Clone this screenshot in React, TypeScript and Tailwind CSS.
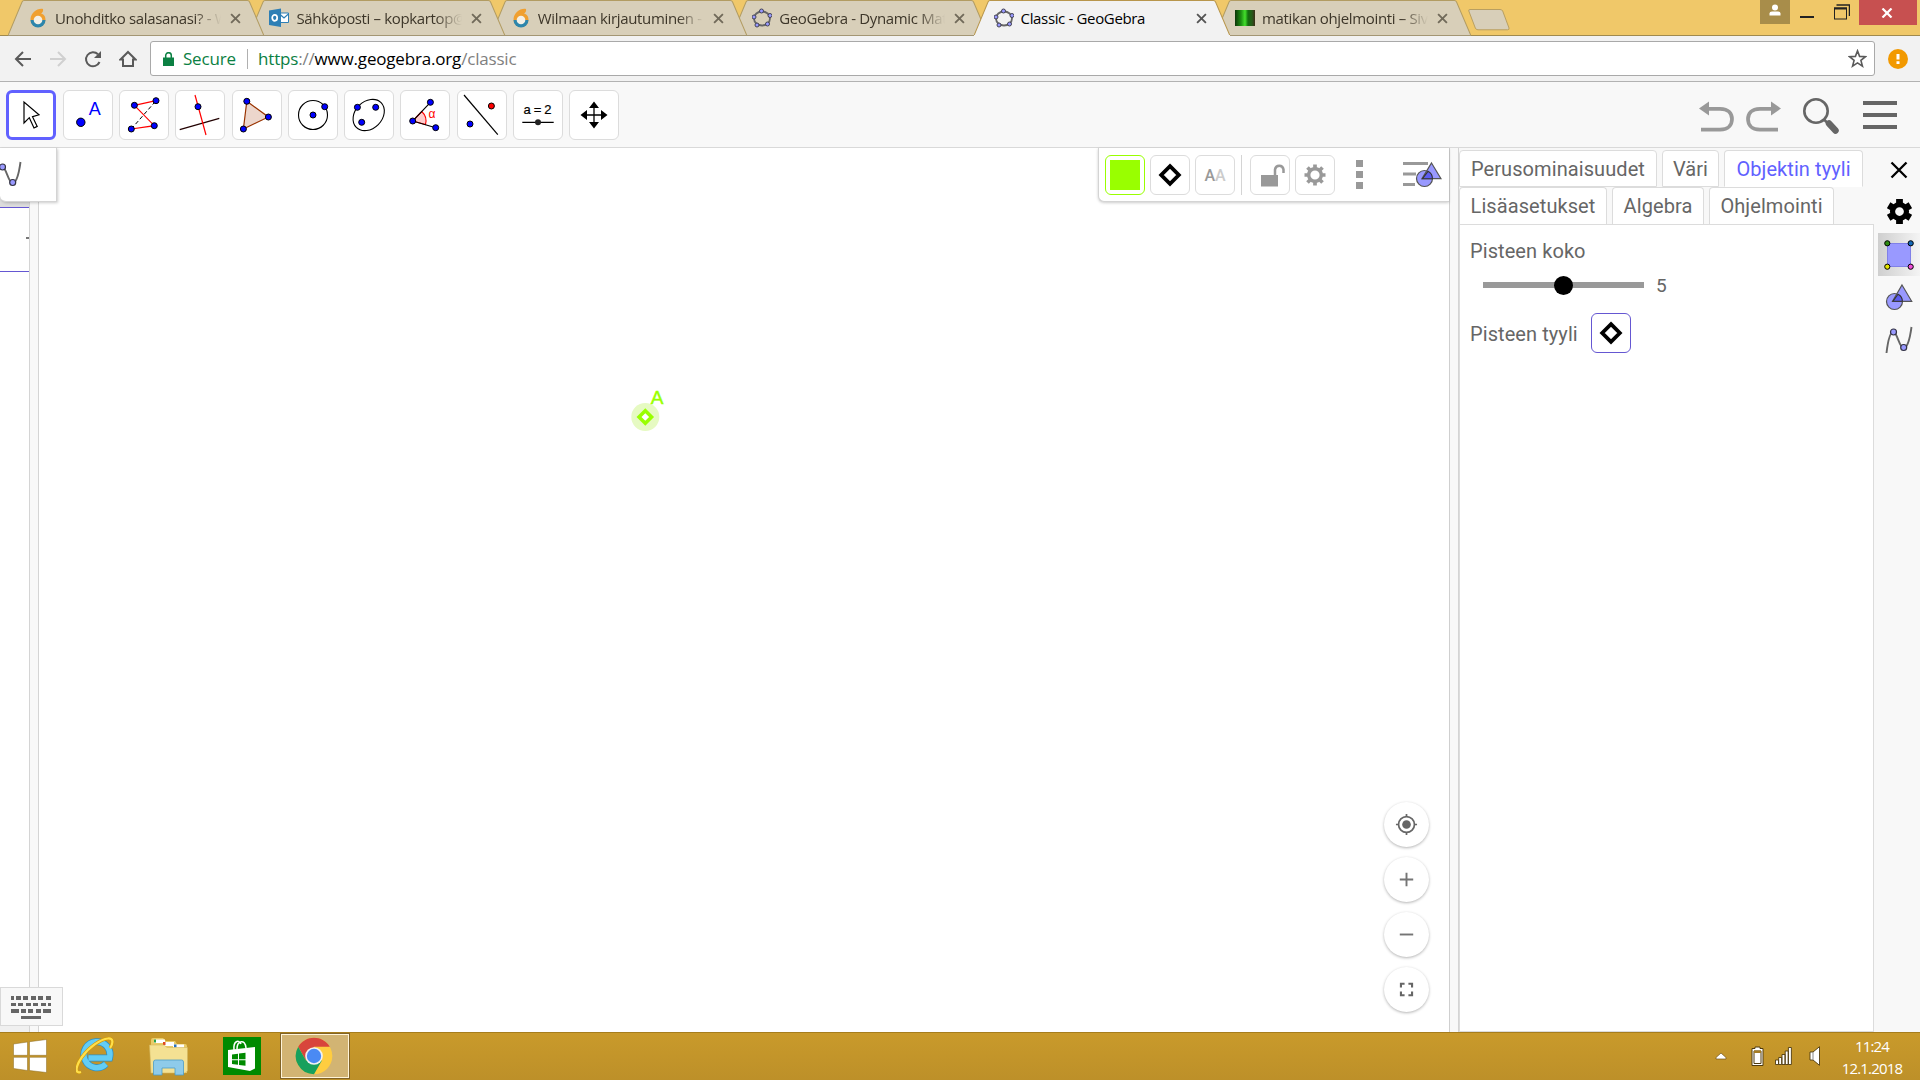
import React from 'react';
import { clsx } from 'clsx';

type IconProps = { className?: string };

/* ---------- small shared drawings ---------- */

const Dot = ({ x, y, r = 3, fill = '#0000ff' }: { x: number; y: number; r?: number; fill?: string }) => (
  <circle cx={x} cy={y} r={r} fill={fill} stroke="#000" strokeWidth="1" />
);

const Diamond = ({ className }: IconProps) => (
  <svg viewBox="0 0 24 24" className={className}>
    <path d="M12 3.2 20.8 12 12 20.8 3.2 12Z" fill="none" stroke="#000" strokeWidth="3.8" />
  </svg>
);

const GraphIcon = ({ className }: IconProps) => (
  <svg viewBox="0 0 28 28" className={className}>
    <path d="M1.5 27C3 14 5 6 8.5 6S14.500 22 18.500 22 25 12 26.500 1" fill="none" stroke="#666" strokeWidth="1.900" />
    <circle cx="8.500" cy="6" r="3" fill="#9999ff" stroke="#333344" strokeWidth="1.200" />
    <circle cx="18.700" cy="21.500" r="3" fill="#9999ff" stroke="#333344" strokeWidth="1.200" />
  </svg>
);

const ShapesIcon = ({ className }: IconProps) => (
  <svg viewBox="0 0 28 28" className={className}>
    <circle cx="9.500" cy="18.500" r="8" fill="#9999ff" stroke="#555" strokeWidth="1.200" />
    <path d="M17 2 26.700 18.300H7.500Z" fill="#9999ff" stroke="#555" strokeWidth="1.200" />
    <path d="M17.400 18.300A8 8 0 0 0 13 11.300L8 18.300Z" fill="#5c5cf0" stroke="#333" strokeWidth="1.100" />
  </svg>
);

const WilmaIcon = () => (
  <svg viewBox="0 0 20 20" className="size-5">
    <path d="M15 1C9 0 3 5 2.500 11a7.500 7.500 0 0 0 15 1C17.500 8 15.500 6 13 5.500 14.500 4.500 15.500 3 15 1Z" fill="#f0a030" />
    <path d="M2.500 12a7.500 7.500 0 0 0 15 0Z" fill="#2d86ac" />
    <circle cx="10" cy="12" r="4.300" fill="#f4f0e6" />
  </svg>
);

const OutlookIcon = () => (
  <svg viewBox="0 0 20 20" className="size-5">
    <path d="M10 5h9.500v9.500H10Z" fill="#fff" stroke="#2e7fb5" />
    <path d="m10 5.500 5 4.500 5-4.500" fill="none" stroke="#2e7fb5" strokeWidth="1.300" />
    <path d="M0 2.500 12 0.500v18.500L0 17Z" fill="#2e7fb5" />
    <ellipse cx="5.700" cy="9.800" rx="2.500" ry="3" fill="none" stroke="#fff" strokeWidth="1.700" />
  </svg>
);

const GeoGebraIcon = () => (
  <svg viewBox="0 0 20 20" className="size-5">
    <ellipse cx="10" cy="10.500" rx="8" ry="7" fill="none" stroke="#666" strokeWidth="1.800" />
    {[[9.500, 3], [18, 7.500], [15.500, 16], [5, 17], [2, 9]].map(([x, y]) => (
      <circle key={x} cx={x} cy={y} r="2" fill="#9999ff" stroke="#444455" strokeWidth="1" />
    ))}
  </svg>
);

const MatrixIcon = () => (
  <div className="h-4 w-5 bg-[linear-gradient(90deg,#0c3508,#1d8f12_30%,#44e02c_50%,#12700d_65%,#27591a_85%,#3d2d18)]" />
);

/* ---------- browser ---------- */

const tabs = [
  { title: 'Unohditko salasanasi? - W', icon: <WilmaIcon />, z: 'z-[6]' },
  { title: 'Sähköposti – kopkartop@', icon: <OutlookIcon />, z: 'z-[5]' },
  { title: 'Wilmaan kirjautuminen -', icon: <WilmaIcon />, z: 'z-[4]' },
  { title: 'GeoGebra - Dynamic Mat', icon: <GeoGebraIcon />, z: 'z-[3]' },
  { title: 'Classic - GeoGebra', icon: <GeoGebraIcon />, z: 'z-[8]', active: true },
  { title: 'matikan ohjelmointi – Siv', icon: <MatrixIcon />, z: 'z-[1]' },
];

const TabStrip = () => (
  <div className="relative flex h-9 bg-[#f0c869] pl-2">
    <div className="absolute inset-x-0 bottom-0 h-px bg-[#a08a4e]" />
    {tabs.map((tab) => (
      <div key={tab.title} className={clsx('relative -mr-[15px] flex h-9 w-[256.400px] shrink-0 items-center pl-[20px]', tab.z)}>
        <svg viewBox="0 0 256 36" preserveAspectRatio="none" className="absolute inset-0 h-full w-full">
          <path
            d="M0 35.500 14 2Q14.600.5 16 .5H239Q240.500.5 241.200 2L255.500 35.500"
            fill={tab.active ? '#f2f2f2' : '#d8cfb9'}
            stroke={tab.active ? '#b8964c' : '#b29c62'}
          />
          <path d="M0 35.500H256" stroke={tab.active ? '#f2f2f2' : '#a39674'} />
        </svg>
        <div className="relative flex items-center">
          {tab.icon}
          <span
            className={clsx(
              'ml-[7px] w-[166px] overflow-hidden font-["Open_Sans",sans-serif] text-[15px] tracking-[-0.350px] whitespace-nowrap',
              tab.active ? 'text-black' : 'text-[#3d3629] [mask-image:linear-gradient(90deg,#000_84%,transparent)]',
            )}
          >
            {tab.title}
          </span>
          <svg viewBox="0 0 10 10" className="ml-[9px] size-[11px]">
            <path d="m1 1 8 8M9 1 1 9" stroke={tab.active ? '#555' : '#716a5a'} strokeWidth="1.700" />
          </svg>
        </div>
      </div>
    ))}
    <svg viewBox="0 0 42 22" className="mt-[9px] ml-[12px] h-[22px] w-[42px]">
      <path d="M2 .5H32Q34 .5 34.700 2L41 19Q41.500 20.800 39.500 20.800H10Q8 20.800 7.300 19L.8 2Q.3.500 2 .5Z" fill="#d8cfb9" stroke="#b89f61" />
    </svg>

    <div className="ml-auto flex items-start pr-[3px]">
      <div className="flex h-6 w-[30px] justify-center bg-[#a88d4a]">
        <svg viewBox="0 0 12 12" className="mt-1 size-3">
          <circle cx="6" cy="3.500" r="3" fill="#fff" />
          <path d="M.5 11.500V9.500Q.5 7.500 3 7.500H9Q11.500 7.500 11.500 9.500v2Z" fill="#fff" />
        </svg>
      </div>
      <div className="mt-4 ml-[10px] h-[2px] w-[14px] bg-[#222]" />
      <svg viewBox="0 0 16 16" className="mt-1 ml-5 size-4">
        <path d="M2.500 1H15.500V12" fill="none" stroke="#222" strokeWidth="1.500" />
        <rect x=".5" y="4" width="12" height="11" fill="none" stroke="#222" />
        <path d="M0 4.500H13" stroke="#222" strokeWidth="2" />
      </svg>
      <div className="ml-[9px] flex h-[25px] w-[58px] items-center justify-center bg-[#c75050]">
        <svg viewBox="0 0 12 10" className="mr-[2px] h-[10px] w-3">
          <path d="m1.500.5 9 9M10.500.5l-9 9" stroke="#fff" strokeWidth="2.200" />
        </svg>
      </div>
    </div>
  </div>
);

const AddressBar = () => (
  <div className="flex h-[46px] items-start border-b border-[#b2b2b2] bg-[#f2f2f2] pt-[5px]">
    <div className="flex h-9 w-[150px] items-center pl-[14px]">
      <svg viewBox="0 0 18 18" className="size-[18px]">
        <path d="M17 9H2M9 2 2 9l7 7" fill="none" stroke="#5a5a5a" strokeWidth="2" />
      </svg>
      <svg viewBox="0 0 18 18" className="ml-[17px] size-[18px]">
        <path d="M1 9H16M9 2l7 7-7 7" fill="none" stroke="#d0d0d0" strokeWidth="2" />
      </svg>
      <svg viewBox="0 0 18 18" className="ml-[17px] size-[18px]">
        <path d="M15.500 12A7 7 0 1 1 14 4.300" fill="none" stroke="#5a5a5a" strokeWidth="2" />
        <path d="M17 1V8H10Z" fill="#5a5a5a" />
      </svg>
      <svg viewBox="0 0 18 18" className="ml-[17px] size-[18px]">
        <path d="M9 2 16.500 9.500H14V16H4V9.500H1.500Z" fill="none" stroke="#5a5a5a" strokeWidth="2" />
      </svg>
    </div>
    <div className="flex h-[35px] w-[1725px] items-center rounded-[3px] border border-[#a9a9a9] bg-white pr-[7px] pl-3 font-['Open_Sans',sans-serif] text-[17px]">
      <svg viewBox="0 0 11 14" className="h-[14px] w-[11px]">
        <path d="M0 5.500H11V14H0Z" fill="#0b8043" />
        <path d="M2.700 6V3.500a2.800 2.800 0 0 1 5.600 0V6" fill="none" stroke="#0b8043" strokeWidth="1.500" />
      </svg>
      <span className="ml-[9px] w-[64px] tracking-[-0.200px] text-[#0b8043]">Secure</span>
      <span className="h-5 w-px bg-[#b0b0b0]" />
      <span className="ml-[10px] tracking-[-0.180px] text-[#808080]">
        <span className="text-[#0b8043]">https</span>://<span className="text-black">www.geogebra.org</span>/classic
      </span>
      <svg viewBox="0 0 20 20" className="ml-auto size-[19px]">
        <path d="m10 2 2.200 5.800 6.200.3-4.800 3.900 1.600 6L10 14.600 4.800 18l1.600-6L1.600 8.100l6.200-.3Z" fill="none" stroke="#5a5a5a" strokeWidth="1.700" />
      </svg>
    </div>
    <svg viewBox="0 0 20 20" className="mt-2 ml-[13px] size-5">
      <circle cx="10" cy="10" r="10" fill="#f29900" />
      <path d="M8.500 5H11.500V10.500H8.500ZM8.500 12.300H11.500V15H8.500Z" fill="#fff" />
    </svg>
  </div>
);

/* ---------- GeoGebra toolbar ---------- */

const tools = [
  {
    name: 'move',
    icon: <path d="M18 12V33L23.300 27.700 28 38 31.200 36.400 26.500 26.700 33 24.700Z" fill="#fff" stroke="#000" strokeWidth="1.200" />,
  },
  {
    name: 'point',
    icon: (
      <>
        <Dot x={17.8} y={32.3} r={4.2} />
        <text x="31.800" y="25" textAnchor="middle" fontSize="18" fill="#0000ff" className="font-['Liberation_Sans',sans-serif]">A</text>
      </>
    ),
  },
  {
    name: 'polyline',
    icon: (
      <>
        <path d="M12.300 39 37 10.700" stroke="#000" strokeDasharray="4 2.500" />
        <path d="M37 10.700 15.400 15.300 35.300 35.700 12.300 39" fill="none" stroke="#f00" strokeWidth="1.200" />
        <Dot x={15.4} y={15.3} />
        <Dot x={37} y={10.7} />
        <Dot x={12.3} y={39} />
        <Dot x={35.3} y={35.7} />
      </>
    ),
  },
  {
    name: 'perpendicular',
    icon: (
      <>
        <path d="M4.700 39.700 44.300 28.300" stroke="#200" strokeWidth="1.200" />
        <path d="M20 5 31 45" stroke="#f00" strokeWidth="1.200" />
        <Dot x={23} y={16.7} />
      </>
    ),
  },
  {
    name: 'polygon',
    icon: (
      <>
        <path d="M14.800 11.300 36.400 27 11.400 39Z" fill="#ecd6cc" stroke="#993300" strokeWidth="1.200" />
        <Dot x={14.8} y={11.3} />
        <Dot x={36.4} y={27} />
        <Dot x={11.4} y={39} />
      </>
    ),
  },
  {
    name: 'circle',
    icon: (
      <>
        <circle cx="25" cy="25" r="14.500" fill="none" stroke="#000" strokeWidth="1.100" />
        <Dot x={25} y={25} />
        <Dot x={36.7} y={16.7} />
      </>
    ),
  },
  {
    name: 'ellipse',
    icon: (
      <>
        <ellipse cx="24.700" cy="25" rx="17.500" ry="13.500" transform="rotate(-45 24.700 25)" fill="none" stroke="#000" strokeWidth="1.100" />
        <Dot x={13.4} y={17.3} />
        <Dot x={31.7} y={17.3} />
        <Dot x={17.7} y={32.3} />
      </>
    ),
  },
  {
    name: 'angle',
    icon: (
      <>
        <path d="M12.700 31 21.700 21.500A13 13 0 0 1 25.500 34.500Z" fill="#fcc" stroke="#f00" strokeWidth="1.100" />
        <path d="M30.400 12.300 12.700 31 35.700 37.700" fill="none" stroke="#000" strokeWidth="1.100" />
        <Dot x={12.7} y={31} />
        <Dot x={30.4} y={12.3} />
        <Dot x={35.7} y={37.7} />
        <text x="32" y="28" textAnchor="middle" fontSize="12" fill="#f00" className="font-['Liberation_Sans',sans-serif]">α</text>
      </>
    ),
  },
  {
    name: 'reflect',
    icon: (
      <>
        <path d="M7 5 40.800 44.700" stroke="#000" strokeWidth="1.200" />
        <Dot x={13} y={34} />
        <Dot x={34.4} y={16} fill="#ff0000" />
      </>
    ),
  },
  {
    name: 'slider',
    icon: (
      <>
        <text x="24.500" y="23.500" textAnchor="middle" fontSize="13" textLength="28" stroke="#000" strokeWidth=".2" className="font-['Liberation_Sans',sans-serif]">a=2</text>
        <path d="M9.300 32.300H40.700" stroke="#000" strokeWidth="1.300" />
        <circle cx="25" cy="32.300" r="3" fill="#222" />
      </>
    ),
  },
  {
    name: 'pan',
    icon: (
      <>
        <path d="M25 15V35M15 25H35" stroke="#000" strokeWidth="1.300" />
        <path d="M25 11.500 30 18H20ZM25 38.500 30 32H20ZM11.500 25 18 20V30ZM38.500 25 32 20V30Z" />
      </>
    ),
  },
];

const Toolbar = () => (
  <div className="flex h-[66px] items-start border-b border-[#d9d9d9] bg-[#f8f8f8] pt-2 pr-[23px] pl-[6px]">
    <div className="flex gap-[6.250px]">
      {tools.map((tool, i) => (
        <button
          key={tool.name}
          className={clsx(
            'h-[50px] w-[50px] overflow-hidden rounded-[6px] bg-white',
            i === 0 ? 'mr-[0.700px] border-[3px] border-[#6161ff]' : 'border border-[#dcdcdc]',
          )}
        >
          <svg viewBox={i === 0 ? '3 3 44 44' : '1 1 48 48'} className="size-full">
            {tool.icon}
          </svg>
        </button>
      ))}
    </div>
    <div className="ml-auto flex items-start">
      <svg viewBox="0 0 36 31" className="mt-[11px] h-[31px] w-9">
        <path d="M9 7.800H21C30 7.800 33 13 33 18S30 28.700 21 28.700H2" fill="none" stroke="#999" strokeWidth="3.700" />
        <path d="M0 7.500 10 .5V14.500Z" fill="#999" />
      </svg>
      <svg viewBox="0 0 36 31" className="mt-[11px] ml-[10px] h-[31px] w-9">
        <path d="M27 7.800H15C6 7.800 3 13 3 18S6 28.700 15 28.700H33" fill="none" stroke="#999" strokeWidth="3.700" />
        <path d="M36 7.500 26 .5V14.500Z" fill="#999" />
      </svg>
      <svg viewBox="0 0 36 36" className="mt-2 ml-[22px] size-9">
        <circle cx="13" cy="13" r="11.700" fill="none" stroke="#666" strokeWidth="2.600" />
        <path d="m21 21.500 5 5" stroke="#666" strokeWidth="2.500" />
        <path d="m26 25.500 6.500 7" stroke="#666" strokeWidth="6.500" strokeLinecap="round" />
      </svg>
      <div className="mt-[11px] ml-6 flex w-[34px] flex-col gap-2">
        <div className="h-1 bg-[#666]" />
        <div className="h-1 bg-[#666]" />
        <div className="h-1 bg-[#666]" />
      </div>
    </div>
  </div>
);

/* ---------- views ---------- */

const LeftEdge = () => (
  <div className="relative flex w-[39px] shrink-0">
    <div className="flex w-[30px] flex-col border-r border-[#d4d4d4] bg-white">
      <div className="h-[59px] bg-[#dcdcdc]" />
      <div className="flex h-[65px] items-center justify-end border-y border-[#6557d2]">
        <div className="mb-1 h-[2px] w-[3px] bg-[#777]" />
      </div>
      <div className="mt-auto h-[30px] bg-[#f0f0f0]" />
    </div>
    <div className="w-[9px] border-r border-[#d4d4d4] bg-[#f8f8f8]" />
    <div className="absolute top-0 left-0 z-10 h-[54px] w-[57px] overflow-hidden rounded-bl-[6px] border-r border-b border-[#d4d4d4] bg-white shadow-[1px_1px_3px_rgba(0,0,0,0.2)]">
      <GraphIcon className="absolute top-[13px] -left-[6px] size-[28px]" />
    </div>
    <div className="absolute bottom-[6px] left-0 z-10 flex h-[39px] w-[63px] flex-col gap-[3px] border border-[#d9d9d9] bg-[#f8f8f8] pt-2 pl-[10px]">
      <div className="h-[3.500px] w-10 bg-[repeating-linear-gradient(90deg,#666_0_3px,transparent_3px_5px,#666_5px_10px,transparent_10px_12.500px,#666_12.500px_17.500px,transparent_17.500px_20px,#666_20px_25px,transparent_25px_27.500px,#666_27.500px_32.500px,transparent_32.500px_35px,#666_35px_40px)]" />
      <div className="h-[3.500px] w-10 bg-[repeating-linear-gradient(90deg,#666_0_5px,transparent_5px_7.500px)]" />
      <div className="h-[3.500px] w-10 bg-[linear-gradient(90deg,#666_0_8px,transparent_8px_10px,#666_10px_15px,transparent_15px_17.500px,#666_17.500px_22.500px,transparent_22.500px_25px,#666_25px_30px,transparent_30px_32.500px,#666_32.500px)]" />
      <div className="ml-[10px] h-[3.500px] w-5 bg-[#666]" />
    </div>
  </div>
);

const styleButton = 'flex size-10 items-center justify-center rounded-[6px] border bg-white';

const StyleBar = () => (
  <div className="absolute top-0 right-0 flex h-[54px] w-[351px] items-center rounded-bl-[6px] border-b border-l border-[#d4d4d4] bg-white pl-[6px] shadow-[0_1px_3px_rgba(0,0,0,0.200)]">
    <div className="flex gap-[5px]">
      <div className={clsx(styleButton, 'border-[#99ff00]')}>
        <div className="size-[30px] bg-[#99ff00]" />
      </div>
      <div className={clsx(styleButton, 'border-[#dcdcdc]')}>
        <Diamond className="size-6" />
      </div>
      <div className={clsx(styleButton, 'border-[#dcdcdc] pt-[2px] font-["Roboto",sans-serif] text-[16px] font-medium text-[#999]')}>
        A<span className="text-[#ccc]">A</span>
      </div>
    </div>
    <div className="mx-[6px] mr-2 h-10 w-px bg-[#d4d4d4]" />
    <div className="flex gap-[5px]">
      <div className={clsx(styleButton, 'border-[#dcdcdc]')}>
        <svg viewBox="0 0 24 24" className="ml-[5px] size-6">
          <path d="M0 12H17V23.500H0Z" fill="#999" />
          <path d="M14 12V6.500a4.300 4.300 0 0 1 8.500 0V10" fill="none" stroke="#999" strokeWidth="2.500" />
        </svg>
      </div>
      <div className={clsx(styleButton, 'border-[#dcdcdc]')}>
        <svg viewBox="-12 -12 24 24" className="size-6">
          <circle r="6.300" fill="none" stroke="#999" strokeWidth="3.400" />
          <path d="M0-10.500V-7M0 10.500V7M-10.500 0H-7M10.500 0H7M-7.500-7.500-5-5M7.500 7.500 5 5M-7.500 7.500-5 5M7.500-7.500 5-5" stroke="#999" strokeWidth="3.700" />
        </svg>
      </div>
    </div>
    <div className="ml-[21px] flex flex-col gap-1">
      <div className="size-[7px] bg-[#999]" />
      <div className="size-[7px] bg-[#999]" />
      <div className="size-[7px] bg-[#999]" />
    </div>
    <svg viewBox="0 0 39 27" className="ml-[40px] h-[27px] w-[39px]">
      <path d="M0 2.500H25M0 13H13M0 23.500H12" stroke="#999" strokeWidth="3" />
      <circle cx="21.500" cy="17.500" r="8" fill="#9999ff" stroke="#555" strokeWidth="1.200" />
      <path d="M28.500 2 38 17.700H19Z" fill="#9999ff" stroke="#555" strokeWidth="1.200" />
      <path d="M29.400 17.700A8 8 0 0 0 25 10.300L19.500 17.700Z" fill="#5c5cf0" stroke="#333" strokeWidth="1.100" />
    </svg>
  </div>
);

const zoomButtons = [
  <g key="home">
    <circle cx="12" cy="12" r="4.500" fill="#666" />
    <circle cx="12" cy="12" r="8.300" fill="none" stroke="#666" strokeWidth="1.800" />
    <path d="M12 1V4M12 20V23M1 12H4M20 12H23" stroke="#666" strokeWidth="1.800" />
  </g>,
  <path key="in" d="M12 5V19M5 12H19" stroke="#757575" strokeWidth="2" />,
  <path key="out" d="M5 12H19" stroke="#757575" strokeWidth="2" />,
  <path key="full" d="M10 6H6.200V10M14 6H17.800V10M10 18H6.200V14M14 18H17.800V14" fill="none" stroke="#666" strokeWidth="2.200" />,
];

const GraphicsView = () => (
  <div className="relative flex-1 bg-white">
    <svg viewBox="0 0 60 50" className="absolute top-[237px] left-[591px] h-[50px] w-[60px]">
      <circle cx="15.300" cy="32" r="14" fill="#e6fac2" />
      <path d="M15.300 25.700 21.600 32 15.300 38.300 9 32Z" fill="#fff" stroke="#99ff00" strokeWidth="3.500" />
      <text x="27" y="19" textAnchor="middle" fontSize="19" fill="#99ff00" stroke="#99ff00" strokeWidth=".5" className="font-['Liberation_Sans',sans-serif]">A</text>
    </svg>
    <StyleBar />
    <div className="absolute right-5 bottom-5 flex flex-col gap-[10px]">
      {zoomButtons.map((icon) => (
        <button key={icon.key} className="flex size-[45px] items-center justify-center rounded-full bg-white shadow-[0_1px_3px_rgba(0,0,0,0.300)]">
          <svg viewBox="0 0 24 24" className="size-[23px]">{icon}</svg>
        </button>
      ))}
    </div>
  </div>
);

const settingTab = "flex h-[37px] items-center justify-center rounded-t-[4px] border border-[#dcdcdc] bg-white";

const PropertiesPanel = () => (
  <div className="flex w-[462px] shrink-0 bg-[#f8f8f8] font-['Roboto',sans-serif] text-[20px] tracking-[0.080px] text-[#666]">
    <div className="flex w-[416px] flex-col border-l border-[#d4d4d4] pt-[2px]">
      <div className="flex gap-[5px]">
        <div className={clsx(settingTab, 'w-[198px]')}>Perusominaisuudet</div>
        <div className={clsx(settingTab, 'w-[57px]')}>Väri</div>
        <div className={clsx(settingTab, 'w-[139px] border-b-white text-[#6161ff]')}>Objektin tyyli</div>
      </div>
      <div className="flex gap-[5px]">
        <div className={clsx(settingTab, 'w-[148px] border-b-0')}>Lisäasetukset</div>
        <div className={clsx(settingTab, 'w-[92px] border-b-0')}>Algebra</div>
        <div className={clsx(settingTab, 'w-[125px] border-b-0')}>Ohjelmointi</div>
      </div>
      <div className="flex-1 border border-[#dcdcdc] bg-white pt-[11px] pl-[10px]">
        <div className="leading-[30px]">Pisteen koko</div>
        <div className="mt-[2px] flex h-[34px] items-center pl-[13px]">
          <div className="relative h-[6px] w-[161px] bg-[#999]">
            <div className="absolute -top-[6.500px] left-[71px] size-[19px] rounded-full bg-black" />
          </div>
          <span className="ml-3 pt-[2px] text-[19px]">5</span>
        </div>
        <div className="mt-[11px] flex items-center">
          <span className="pt-px">Pisteen tyyli</span>
          <div className={clsx(styleButton, 'ml-[13px] border-[#6557d2]')}>
            <Diamond className="size-6" />
          </div>
        </div>
      </div>
    </div>
    <div className="flex flex-1 flex-col items-end">
      <div className="flex h-[43px] w-[42px] items-center justify-center">
        <svg viewBox="0 0 18 18" className="size-[18px]">
          <path d="m1.500 1.500 15 15M16.500 1.500l-15 15" stroke="#000" strokeWidth="2.300" />
        </svg>
      </div>
      <div className="flex h-[42px] w-[42px] items-center justify-center pb-px">
        <svg viewBox="-12 -12 24 24" className="size-[25px]">
          <circle r="6.700" fill="none" stroke="#000" strokeWidth="5" />
          <path d="M0-12V-8M0 12V8M-10.400-6-7-4M10.400-6 7-4M-10.400 6-7 4M10.400 6 7 4" stroke="#000" strokeWidth="6.500" />
        </svg>
      </div>
      <div className="flex h-[43px] w-[42px] items-center justify-center bg-gradient-to-r from-[#cfcfcf] to-[#f4f4f4]">
        <svg viewBox="0 0 30 30" className="size-[30px]">
          <path d="M3.500 3.500H26.500V26.500H3.500Z" fill="#9999ff" stroke="#8080e8" />
          <Dot x={3.3} y={3.3} r={2.6} fill="#2e8b12" />
          <Dot x={26.7} y={3.3} r={2.6} fill="#1468b8" />
          <Dot x={3.3} y={26.7} r={2.6} fill="#e6e600" />
          <Dot x={26.7} y={26.7} r={2.6} fill="#f04fd8" />
        </svg>
      </div>
      <div className="flex h-[43px] w-[42px] items-center justify-center pb-[2px]">
        <ShapesIcon className="size-7" />
      </div>
      <div className="flex h-[43px] w-[42px] items-center justify-center pb-[2px]">
        <GraphIcon className="size-7" />
      </div>
    </div>
  </div>
);

/* ---------- Windows taskbar ---------- */

const Taskbar = () => (
  <div className="flex h-12 items-center border-t border-[#a67d1d] bg-gradient-to-b from-[#c99a2b] to-[#bd9029] pr-[16px] pb-px pl-[13px]">
    <svg viewBox="0 0 34 34" className="size-[34px]">
      <path d="M.5 5 14.500 3V16.300H.5ZM16.500 2.700 33.500.5V16.300H16.500ZM.5 18.300H14.500V31.500L.5 29.500ZM16.500 18.300H33.500V33.500L16.500 31.500Z" fill="#fff" stroke="#8a6a20" strokeWidth=".5" />
    </svg>
    <svg viewBox="0 0 38 38" className="ml-[29px] size-[38px]">
      <path d="M30 27A13 13 0 1 1 33.500 21H12.500" fill="none" stroke="#2d8fc4" strokeWidth="7" />
      <path d="M30 27A13 13 0 1 1 33.500 21H12.500" fill="none" stroke="#63cdf5" strokeWidth="5.500" />
      <path d="M5 35C-1 37-1 30 6 20 13 10 25 2 32 1.500 38 1 37 7 34 11" fill="none" stroke="#d49a06" strokeWidth="3.400" />
      <path d="M5 35C-1 37-1 30 6 20 13 10 25 2 32 1.500 38 1 37 7 34 11" fill="none" stroke="#ffdf4a" strokeWidth="2.200" />
    </svg>
    <svg viewBox="0 0 39 39" className="ml-[35px] size-[39px]">
      <path d="M2 36V3Q2 1 4 1H14L17 4H26L28 7H36Q38 7 38 9V36Z" fill="#e9cc68" />
      <path d="M5 2.500H16V6H5ZM14 5H25V9H14ZM24 7.500H35V11H24Z" fill="#fff" />
      <path d="M5 2.500H7V5.500H5Z" fill="#2aa147" />
      <path d="M14 5H16.500V8H14Z" fill="#e04a20" />
      <path d="M25 7.500H27.500V10.500H25Z" fill="#2672c4" />
      <path d="M.5 8H15L18 10.500H38.500V34L36 36H2Z" fill="#f4e193" stroke="#d3b75f" strokeWidth=".6" />
      <path d="M4.500 38V25Q4.500 23 6.500 23H32.500Q34.500 23 34.500 25V38H26V31H13V38Z" fill="#8ecbea" stroke="#4d9cc7" strokeWidth=".8" />
    </svg>
    <svg viewBox="0 0 38 38" className="ml-[35px] size-[38px]">
      <path d="M0 0H38V38H0Z" fill="#008a00" />
      <path d="M5 13 32 10V31.500L27 34 5 30Z" fill="#fff" />
      <path d="M11 13C10 4 16 2 18 7M14 12C14 4 22 1 23 11" fill="none" stroke="#fff" strokeWidth="1.500" />
      <path d="m9 17.500 6-.8v5.500H9ZM16 16.500l6.500-.8v6.500H16ZM9 23.200h6v4.500l-6-.7ZM16 23.200h6.500v5.600L16 28Z" fill="#008a00" />
    </svg>
    <div className="ml-[19px] flex h-[46px] w-[70px] items-center justify-center border border-[#806226] bg-[#d2b473] pr-[2px] shadow-[inset_0_0_0_1px_#fff4d8]">
      <svg viewBox="-19 -19 38 38" className="size-[38px]">
        <circle r="18.300" fill="#ffcd40" />
        <path d="M-15.800-9.200A18.300 18.300 0 0 1 15.800-9.200H0L-8 4.600Z" fill="#d8453c" />
        <path d="M-15.800-9.200A18.300 18.300 0 0 0 0 18.300L7.900 4.600H-8Z" fill="#17a05d" />
        <circle r="8.800" fill="#f2f2f2" />
        <circle r="7.200" fill="#4a8af4" />
      </svg>
    </div>

    <div className="ml-auto flex items-center">
      <svg viewBox="0 0 12 8" className="size-[12px]">
        <path d="M6 1 11 5.500V7H1V5.500Z" fill="#fff" stroke="#6e521a" strokeWidth=".7" />
      </svg>
      <svg viewBox="0 0 13 20" className="ml-[24px] h-5 w-[13px]">
        <path d="M4 1H9V2.500H12V19.500H1V2.500H4Z" fill="#fff" stroke="#4f3b10" />
        <path d="M3 5H10V17.500H3Z" fill="#fff" stroke="#4f3b10" />
        <path d="M3 4.500H10V7H3Z" fill="#a67c22" />
      </svg>
      <svg viewBox="0 0 17 18" className="ml-[11px] h-[18px] w-[17px]">
        <path d="M.5 13H3.500V17.500H.5ZM3.700 10.500H6.700V17.500H3.700ZM7 7.500H10V17.500H7ZM10.200 4H13.200V17.500H10.200ZM13.400.5H16.400V17.500H13.400Z" fill="#fff" stroke="#4f3b10" strokeWidth=".9" />
      </svg>
      <svg viewBox="0 0 12 20" className="ml-[17px] h-5 w-3">
        <path d="M1 6H4L10.500.7V19.300L4 14H1Z" fill="#fff" stroke="#4f3b10" strokeWidth=".9" />
        <path d="M4 6V14" stroke="#888" />
      </svg>
      <div className="ml-[19px] w-[64px] pt-px text-center font-['Open_Sans',sans-serif] text-[15px] leading-[22px] tracking-[-0.800px] whitespace-nowrap text-white">
        <div>11:24</div>
        <div>12.1.2018</div>
      </div>
    </div>
  </div>
);

const App: React.FC = () => (
  <div className="flex h-[1080px] w-[1920px] flex-col overflow-hidden bg-white">
    <TabStrip />
    <AddressBar />
    <Toolbar />
    <div className="flex min-h-0 flex-1">
      <LeftEdge />
      <GraphicsView />
      <div className="w-[9px] shrink-0 border-l border-[#cfcfcf] bg-[#f8f8f8]" />
      <PropertiesPanel />
    </div>
    <Taskbar />
  </div>
);

export default App;
